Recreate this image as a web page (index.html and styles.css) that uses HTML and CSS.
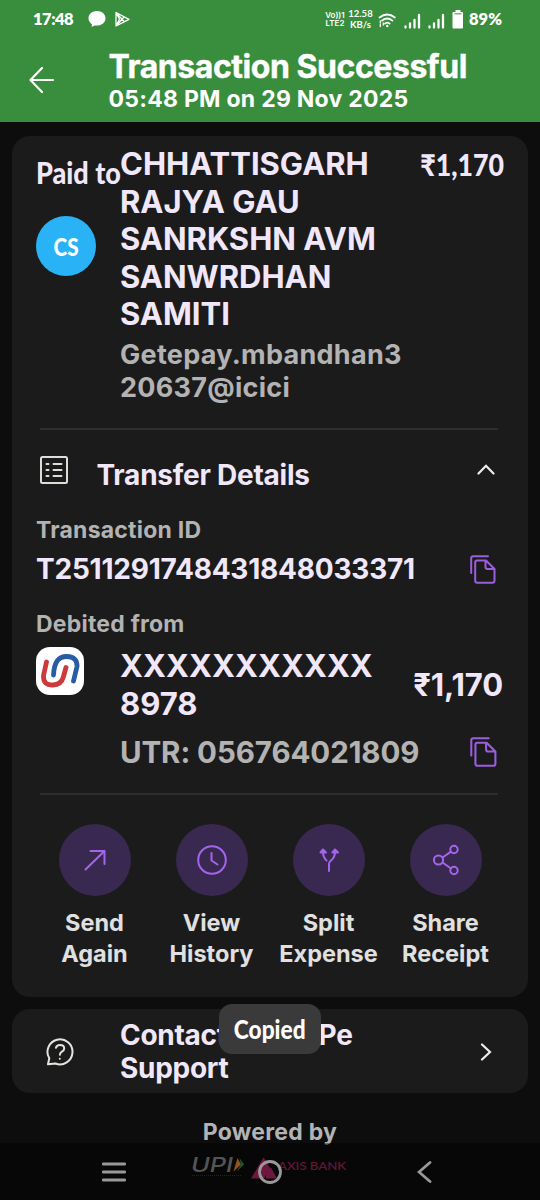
FILE: index.html
```html
<!DOCTYPE html>
<html lang="en">
<head>
<meta charset="utf-8">
<title>Transaction Successful</title>
<link rel="stylesheet" href="styles.css">
</head>
<body>
<div class="screen">
  <header class="header">
    <div class="status">
      <span class="clock">17:48</span>
      <svg class="status-left" width="50" height="24" viewBox="0 0 50 24">
        <path d="M14 4c5 0 8.500 3.200 8.500 7.300S19 18.600 14 18.600c-1 0-1.600 0-2.400-.2L8.700 20l.2-2.800C6.700 15.800 5.500 13.800 5.500 11.300 5.500 7.200 9 4 14 4z" fill="#fff"/>
        <path d="M33 5.500v13.500l13-6.700zM33 5.500l8 9M33 19l8-9M33 5.500l3.500 6.800-3.500 6.700" fill="none" stroke="#fff" stroke-width="1.300" stroke-linejoin="round"/>
      </svg>
      <div class="status-right">
        <div class="tiny lte"><span>Vo))1</span><span>LTE2</span></div>
        <div class="tiny speed"><span>12.58</span><span>KB/s</span></div>
        <svg class="signals" width="88" height="24" viewBox="0 0 88 24" fill="none" stroke="#fff">
          <g stroke-width="1.800" stroke-linecap="round">
            <path d="M2.500 10.500q7.700-6 15.400 0M5 13.600q5.200-4.200 10.400 0M8 16.600q2.300-2 4.600 0"/>
            <path d="M3.300 14v5.500M6.300 16v3.500" stroke-width="1.300" stroke-dasharray="2 1.500"/>
          </g>
          <circle cx="10.300" cy="19" r="1.200" fill="#fff" stroke="none"/>
          <path d="M28.500 20.500v-1M33 20.500v-4M37.500 20.500v-7.500M42 20.500v-12.500M52.500 20.500v-1M57 20.500v-4M61.500 20.500v-7.500M66 20.500v-12.500" stroke-width="2.300" stroke-linecap="round"/>
          <path d="M78.500 5v-2h5v2h1.500q1 0 1 1v14.500q0 1-1 1h-8.500q-1 0-1-1v-14.500q0-1 1-1z" fill="#fff" stroke="none"/>
          <path d="M77.500 6.800h7" stroke="#388e3c" stroke-width="1"/>
        </svg>
        <span class="battery">89%</span>
      </div>
    </div>
    <div class="titlebar">
      <svg class="back" width="26" height="28" viewBox="0 0 26 28"><path d="M24 14H1.500M13 2L1.500 14 13 26" fill="none" stroke="#fff" stroke-width="2.200" stroke-linecap="round" stroke-linejoin="round"/></svg>
      <div>
        <h1 class="title">Transaction Successful</h1>
        <p class="subtitle">05:48 PM on 29 Nov 2025</p>
      </div>
    </div>
  </header>

  <main class="content">
    <section class="card details">
      <div class="payee">
        <div class="payee-side">
          <span class="paid"><span class="hand">Paid to</span></span>
          <div class="avatar"><span class="hand">CS</span></div>
        </div>
        <div class="payee-main">
          <div class="name">CHHATTISGARH<br>RAJYA GAU<br>SANRKSHN AVM<br>SANWRDHAN<br>SAMITI</div>
          <div class="vpa">Getepay.mbandhan3<br>20637@icici</div>
        </div>
        <div class="amount-top"><span class="hand">₹1,170</span></div>
      </div>
      <hr class="rule">
      <div class="section-head">
        <svg class="list-icon" width="28" height="28" viewBox="0 0 28 28" fill="none" stroke="#deded8" stroke-width="2">
          <rect x="1" y="1" width="26" height="26" rx="1.500"/>
          <path d="M6.500 8h2M6.500 14h2M6.500 20h2" stroke-linecap="round"/>
          <path d="M13.500 8h8M13.500 14h8M13.500 20h8" stroke-linecap="round"/>
        </svg>
        <h2 class="section-title">Transfer Details</h2>
        <svg class="chev-up" width="18" height="11" viewBox="0 0 18 11"><path d="M1.500 9.500L9 1.800l7.500 7.700" fill="none" stroke="#eee" stroke-width="2.200" stroke-linecap="round"/></svg>
      </div>
      <div class="label label-id">Transaction ID</div>
      <div class="txn">
        <span class="txn-id">T2511291748431848033371</span>
        <svg class="copy" width="26" height="29" viewBox="0 0 26 29" fill="none" stroke="#9b5fdd" stroke-width="2" stroke-linecap="round" stroke-linejoin="round"><path d="M1.200 18V3.200q0-2 2-2H18M7.200 5.500H16l8.500 8.500v11.800q0 2-2 2H7.200q-2 0-2-2V7.500q0-2 2-2zM15.500 5.500v6.500q0 2 2 2h7"/></svg>
      </div>
      <div class="label label-from">Debited from</div>
      <div class="debit">
        <svg class="bank" width="48" height="48" viewBox="0 0 48 48" fill="none" stroke-width="4.800" stroke-linecap="round">
          <rect width="48" height="48" rx="14" fill="#fff"/>
          <path d="M17.500 28Q18 18 21.500 13.500 25 9.300 31 9.500q10.500 .5 10 10L37.500 34" stroke="#285da3"/>
          <path d="M10.500 15L7.500 28.500Q7 38.500 17 38q8-.3 10-7 1.500-5 3-10.500" stroke="#cb3a3c"/>
        </svg>
        <div class="account"><span class="mask">XXXXXXXXXXX</span><br>8978</div>
        <div class="amount">₹1,170</div>
      </div>
      <div class="utr-row">
        <span class="utr">UTR: 056764021809</span>
        <svg class="copy" width="27" height="30" viewBox="0 0 26 29" fill="none" stroke="#9b5fdd" stroke-width="2" stroke-linecap="round" stroke-linejoin="round"><path d="M1.200 18V3.200q0-2 2-2H18M7.200 5.500H16l8.500 8.500v11.800q0 2-2 2H7.200q-2 0-2-2V7.500q0-2 2-2zM15.500 5.500v6.500q0 2 2 2h7"/></svg>
      </div>
      <hr class="rule rule-2">
      <div class="actions">
        <div class="action">
          <svg class="disc" viewBox="0 0 72 72"><path d="M26.500 45.500L45.500 27M31.500 27H45.500V40" /></svg>
          <span>Send<br>Again</span>
        </div>
        <div class="action">
          <svg class="disc" viewBox="0 0 72 72"><circle cx="36" cy="36" r="13.800"/><path d="M35.500 29v7.500l6 4"/></svg>
          <span>View<br>History</span>
        </div>
        <div class="action">
          <svg class="disc" viewBox="0 0 72 72"><path d="M36 47v-7q0-2 2-3.500 4-3 4-9M30 27.500q0 6 3.500 9"/><path d="M27.500 28.500l2.500-3 3 3zM39.500 28.500l2.500-3 3 3z" fill="#a564ec"/></svg>
          <span>Split<br>Expense</span>
        </div>
        <div class="action">
          <svg class="disc" viewBox="0 0 72 72"><circle cx="28.500" cy="36" r="4.600"/><circle cx="44" cy="25.500" r="3.700"/><circle cx="44" cy="46.500" r="3.700"/><path d="M32.500 33.500L41 27.700M32.500 38.500l8.500 6"/></svg>
          <span>Share<br>Receipt</span>
        </div>
      </div>
    </section>

    <section class="card support">
      <svg class="help" width="28" height="28" viewBox="0 0 28 28" fill="none" stroke="#e4e4e0" stroke-width="2" stroke-linecap="round" stroke-linejoin="round">
        <path d="M2 26.300l1.300-6A12.500 12.500 0 1 1 9.500 25.500zM10 9.800q.6-2.800 4-2.800 4.200 0 4.200 3.400 0 2-2.300 3.200-2 1-2 3.200M13.800 20.700v.1"/>
      </svg>
      <div class="support-text">Contact PhonePe<br>Support</div>
      <svg class="chev-right" width="12" height="18" viewBox="0 0 12 18"><path d="M2 1.500L10 9l-8 7.500" fill="none" stroke="#eee" stroke-width="2.200" stroke-linecap="round"/></svg>
    </section>

    <div class="powered">Powered by</div>
    <div class="partners">
      <svg width="160" height="28" viewBox="0 0 160 28">
        <text class="upi" x="0" y="17.500" textLength="42" lengthAdjust="spacingAndGlyphs">UPI</text>
        <path d="M46.500 4l3.500 6.500-7.500 7z" fill="#f58a35"/><path d="M48.500 4l4.500 6.500-7.500 7 4.500-7z" fill="#1d9b50"/>
        <path d="M1 21.500h49" stroke="#3a3a3a" stroke-width="1" stroke-dasharray="1 1"/>
        <path d="M60 24.500l12.500-21 6.500 10.500-6 10.500zM75 15.500l5-2 6 11H75z" fill="#b82768"/>
        <text class="axis" x="87" y="15.500" textLength="68" lengthAdjust="spacingAndGlyphs">AXIS BANK</text>
      </svg>
    </div>
  </main>

  <div class="toast"><span class="hand">Copied</span></div>
  <nav class="navbar">
    <svg width="24" height="20" viewBox="0 0 24 20"><path d="M1.200 2h21.600M1.200 10h21.600M1.200 18h21.600" stroke="#999" stroke-width="2.800" stroke-linecap="round"/></svg>
    <svg class="home" width="24" height="24" viewBox="0 0 24 24"><circle cx="12" cy="12" r="10.500" fill="none" stroke="#999" stroke-width="2.800"/></svg>
    <svg width="15" height="22" viewBox="0 0 15 22"><path d="M13 1.500L2 11l11 9.500" fill="none" stroke="#999" stroke-width="2.800" stroke-linecap="round"/></svg>
  </nav>
</div>
</body>
</html>
```
FILE: styles.css
```css
* { box-sizing: border-box; }
body { margin: 0; background: #0d0d0d; font-family: Inter, "Noto Sans", sans-serif; font-weight: 700; }
h1, h2, p { margin: 0; font: inherit; }
svg { display: block; flex: none; }
.screen { position: relative; width: 540px; height: 1200px; overflow: hidden; background: #0d0d0d; white-space: nowrap; }

.header { height: 122px; background: #388e3c; color: #fff; }
.status { height: 38px; padding-left: 33px; padding-right: 38px; display: flex; align-items: center; }
.clock { width: 50px; font: 800 16.500px/24px Lato, sans-serif; letter-spacing: -.5px; }
.status-right { margin-left: auto; display: flex; align-items: center; }
.tiny { display: flex; flex-direction: column; align-items: center; font-weight: 600; }
.lte { width: 20px; font-size: 8px; line-height: 8px; margin-right: 3px; }
.speed { width: 25px; font: 700 9.500px/11.500px Lato, sans-serif; margin-right: 4px; }
.battery { width: 33px; margin-left: 4px; font: 800 16.500px/24px Lato, sans-serif; }
.titlebar { display: flex; padding: 10px 0 0 29px; }
.back { margin: 18px 53.500px 0 0; }
.title { padding-top: 1px; font-size: 32px; line-height: 35px; font-weight: 700; letter-spacing: -.45px; -webkit-text-stroke: .4px #fff; }
.subtitle { font-size: 23px; line-height: 31px; letter-spacing: .26px; }

.content { padding: 14px 12px 0; }
.card { background: #1b1b1b; border-radius: 18px; color: #f0e8fa; }
.details { height: 861px; padding: 9px 24px 0; }
.payee { display: flex; }
.payee-side { width: 84px; padding-top: 11px; }
.paid { display: block; height: 32px; font-size: 30px; line-height: 32px; }
.hand { display: inline-block; font-family: Lato, "Noto Sans", sans-serif; font-weight: 900; }
.paid .hand { transform: scaleX(.9); transform-origin: left center; }
.avatar { width: 60px; height: 60px; margin-top: 28px; border-radius: 50%; background: #29b2f5; color: #fff; display: flex; align-items: center; justify-content: center; font-size: 25px; }
.avatar .hand { transform: scaleX(.83); }
.name, .account { font-size: 31px; line-height: 37.500px; letter-spacing: -.02px; }
.mask { letter-spacing: .1px; }
.vpa { margin-top: 6.500px; font-size: 27px; line-height: 32.500px; letter-spacing: .28px; color: #b3b3b3; }
.amount-top { margin-left: auto; font-size: 30px; line-height: 39px; }
.amount-top .hand { transform: scaleX(.89); transform-origin: right center; }
.rule { width: 458px; height: 2px; margin: 24px 0 0 4px; border: 0; background: #2e2e2e; }
.section-head { display: flex; padding: 26px 9px 0 4px; height: 69px; }
.section-title { margin: 2px 0 0 28.500px; font-size: 28px; line-height: 34px; height: 34px; letter-spacing: -.25px; }
.chev-up { margin: 8px 0 0 auto; }
.label { font-size: 23px; line-height: 30px; font-weight: 650; letter-spacing: .22px; color: #b3b3b3; }
.label-id { margin-top: 16px; }
.txn { display: flex; justify-content: space-between; align-items: center; height: 34px; margin-top: 7px; padding-right: 8px; font-size: 28px; letter-spacing: -.22px; }
.label-from { margin-top: 23px; }
.debit { display: flex; margin-top: 8px; }
.bank { margin-right: 36px; }
.amount { margin: 19px 1px 0 auto; font-size: 31px; line-height: 37.500px; letter-spacing: -.1px; }
.utr-row { display: flex; justify-content: space-between; align-items: center; height: 36px; margin: 12px 7px 0 84px; font-size: 29.500px; letter-spacing: -.08px; color: #b3b3b3; }
.rule-2 { margin-top: 23px; }
.actions { display: grid; grid-template-columns: repeat(4, 117px); margin-top: 28.500px; }
.action { display: flex; flex-direction: column; align-items: center; text-align: center; font-size: 23.500px; line-height: 31.500px; color: #e0e0e0; }
.disc { width: 72px; height: 72px; margin-bottom: 11px; border-radius: 50%; background: #392850; fill: none; stroke: #a564ec; stroke-width: 2; stroke-linecap: round; stroke-linejoin: round; }

.support { display: flex; align-items: center; height: 84px; margin-top: 12px; padding: 2px 36px 0 34px; }
.support-text { margin-left: 46px; font-size: 28px; line-height: 33px; letter-spacing: -.28px; }
.chev-right { margin-left: auto; }
.powered { margin-top: 24px; font-size: 23px; line-height: 30px; letter-spacing: .25px; color: #b3b3b3; text-align: center; }
.partners { margin: 7px 0 0 179px; }
.upi { font: italic 500 20px Inter, sans-serif; fill: #8d8d8d; }
.axis { font: 600 11px Lato, sans-serif; fill: #a52458; }

.toast { position: absolute; left: 219px; top: 1004px; width: 102px; height: 50px; padding-bottom: 2px; border-radius: 13px; background: #3a3a3a; color: #fff; display: flex; align-items: center; justify-content: center; font-size: 27px; }
.toast .hand { transform: scaleX(.84); }
.navbar { position: absolute; left: 0; top: 1143px; width: 540px; height: 57px; padding: 0 108px 0 102px; display: flex; align-items: center; justify-content: space-between; background: rgba(0, 0, 0, .4); }
.home { margin-right: 3px; }
```
